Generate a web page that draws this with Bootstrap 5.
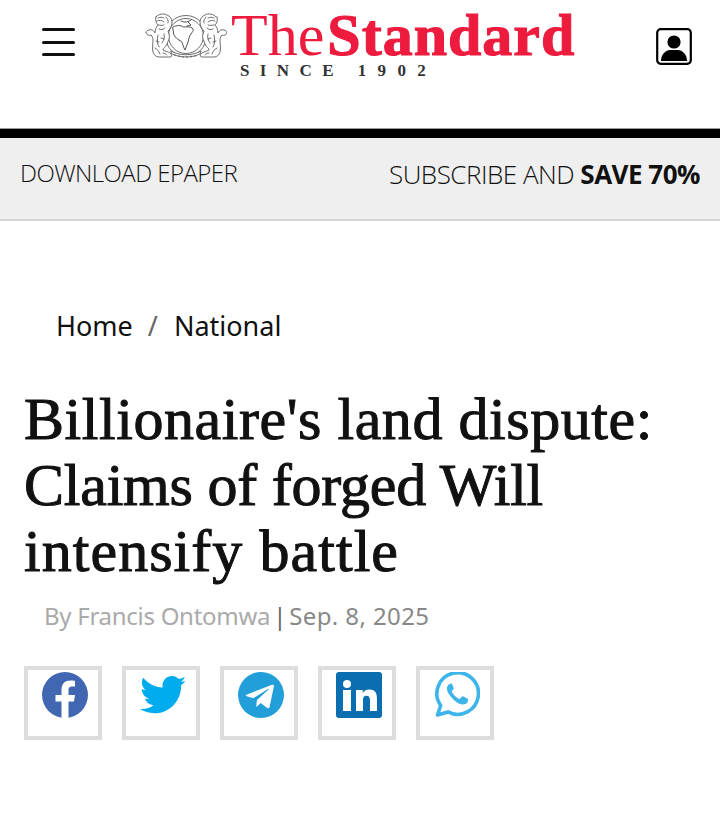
<!DOCTYPE html>
<html lang="en"><head><meta charset="utf-8">
<link href="https://cdn.jsdelivr.net/npm/bootstrap@5.3.0/dist/css/bootstrap.min.css" rel="stylesheet">
<style>
body{background:#fff;color:#000;font-family:"Open Sans","Noto Sans",sans-serif}
.top-head{height:128px;padding:12px 28px 0 42px;align-items:flex-start}
.burger{width:33px;margin-top:16px;background:none;border:0;padding:0}
.burger i{display:block;height:3px;background:#111;border-radius:2px;margin-bottom:9.5px}
.brand-wrap{margin-left:70px;width:432px;text-decoration:none}
.crest{width:82px;height:50px;flex:none}
.word{font-family:"Liberation Serif",serif;color:#ed1b3e;font-size:60px;line-height:46px;height:50px;margin-left:4px;white-space:nowrap}
.word b{letter-spacing:1px;margin-left:3px;-webkit-text-stroke:1.1px #ed1b3e}
.since{font-family:"Liberation Serif",serif;font-weight:700;font-size:17px;letter-spacing:10.4px;line-height:18px;color:#333;margin:0 0 0 95px;white-space:nowrap}
.since span{letter-spacing:11.4px;margin-left:-1px}
.user-ico{margin-left:auto;margin-top:16px;width:36px;height:37px;display:block}
.rule{height:10px;background:#000;border-top:1px solid #999}
.promo{height:83px;background:#efefef;border-bottom:2px solid #d6d6d6;padding:0 20px;color:#111;font-weight:300}
.promo b{font-weight:700}
.promo .dl{font-size:24px;line-height:70px;height:70px;white-space:nowrap;letter-spacing:-.55px}
.promo .sub{font-size:26px;line-height:73px;height:73px;white-space:nowrap;letter-spacing:-.5px}
.crumbs{margin:0;padding:86px 0 0 56px;font-size:27px;line-height:37px;font-family:"Noto Sans","Open Sans",sans-serif;color:#111;list-style:none}
.crumbs li+li::before{color:#666;padding:0 16px 0 15px;content:"/"}
.headline{font-family:"Liberation Serif",serif;font-weight:400;font-size:60px;line-height:66px;margin:42px 0 0 24px;color:#111;-webkit-text-stroke:1px #111}
.headline .l1{letter-spacing:.55px}
.headline .l2{letter-spacing:-.22px}
.headline .l3{letter-spacing:1.05px}
.byline{font-family:"Noto Sans","Open Sans",sans-serif;font-size:24px;line-height:34px;margin:15px 0 0 44px;color:#aaa;white-space:nowrap;letter-spacing:-.28px}
.byline .auth{color:#aaa}
.byline .dt{color:#888;letter-spacing:.4px}
.byline em{font-style:normal;color:#666;padding:0 3px}
.share{margin:33px 0 0 24px;gap:20px}
.share-btn{width:78px;height:74px;border:4px solid #ddd;display:flex;justify-content:center;align-items:flex-start;padding:2px 0 0 4px;background:#fff}
.share-btn svg{width:46px;height:46px;display:block}
</style></head><body>
<header class="d-flex top-head">
  <button class="burger" aria-label="Menu"><i></i><i></i><i></i></button>
  <a class="brand-wrap d-block" href="#">
    <div class="d-flex">
      <svg class="crest" viewBox="0 0 82 50" fill="none" stroke="#555" stroke-width=".85" stroke-linejoin="round" stroke-linecap="round">
        <circle cx="41" cy="24" r="20.500"/><circle cx="41" cy="24" r="17.500"/>
        <path d="M28 15c4-2 8-2 10 0 3 0 8-1 10 2 1 2-1 3-2 5-2 2-2 5-3 8-1 3-2 5-3 8-2-3-2-7-4-9-3-1-5-3-7-6z" stroke="#333" fill="#fff"/>
        <path d="M36 9c3 2 8 1 10-1M43 10l3 3-4 1" stroke="#333"/>
        <path d="M26 39c8 5 22 5 30 0l-1 3c-8 4-20 4-28 0z" fill="#fff"/>
        <path d="M30 42.500v1M34 43.500v1M38 44.500v1M42 44.500v1M46 44v1M50 43.500v1" stroke-width=".9"/>
        <path d="M11 5c2-3 8-4 11-2 3 1 5 4 5 7 0 4-2 7-4 9 1 3 2 5 1 8l-2 5c-1 3-4 4-4 6l2 1c2 1 5 1 6 3 1 1 1 3-1 3H14c-3 0-5-2-6-5-1-4 0-8 0-12 0-2-1-4-2-5-2 1-4 0-5-2 0-2 2-3 3-3 3-1 5 1 6 3 0-3 1-6 3-8-2-2-3-5-2-8z" fill="#fff"/>
        <path d="M71 5c-2-3-8-4-11-2-3 1-5 4-5 7 0 4 2 7 4 9-1 3-2 5-1 8l2 5c1 3 4 4 4 6l-2 1c-2 1-5 1-6 3-1 1-1 3 1 3h12c3 0 5-2 6-5 1-4 0-8 0-12 0-2 1-4 2-5 2 1 4 0 5-2 0-2-2-3-3-3-3-1-5 1-6 3 0-3-1-6-3-8 2-2 3-5 2-8z" fill="#fff"/>
        <path d="M13 6c2-1 4-1 6 0M12 9c2-1 5-1 7 1M13 13c2 0 4 1 6 0M14 17c2 1 4 1 6-1M21 5c1 2 3 3 2 6M19 22c1 3 0 6-2 9M13 23c-1 4-1 9 1 12M10 36c2 1 4 3 5 6M18 41c2 0 3 1 4 2M16 26l3 1M11 29l3 1M69 6c-2-1-4-1-6 0M70 9c-2-1-5-1-7 1M69 13c-2 0-4 1-6 0M68 17c-2 1-4 1-6-1M61 5c-1 2-3 3-2 6M63 22c-1 3 0 6 2 9M69 23c1 4 1 9-1 12M72 36c-2 1-4 3-5 6M64 41c-2 0-3 1-4 2M66 26l-3 1M71 29l-3 1"/>
      </svg>
      <div class="word">The<b>Standard</b></div>
    </div>
    <div class="since">SINCE <span>1902</span></div>
  </a>
  <svg class="user-ico" viewBox="0 0 36 37"><rect x="1.200" y="1.200" width="33.600" height="34.600" rx="3.500" fill="#fff" stroke="#000" stroke-width="2.200"/><circle cx="18" cy="14" r="6.600"/><path d="M5 33c0-7 5-11 9-11h8c4 0 9 4 9 11z"/></svg>
</header>
<div class="rule"></div>
<div class="promo d-flex justify-content-between align-items-start">
  <div class="dl">DOWNLOAD EPAPER</div>
  <div class="sub">SUBSCRIBE AND <b>SAVE 70%</b></div>
</div>
<ol class="crumbs d-flex"><li>Home</li><li>National</li></ol>
<h1 class="headline"><span class="l1 d-block">Billionaire's land dispute:</span><span class="l2 d-block">Claims of forged Will</span><span class="l3 d-block">intensify battle</span></h1>
<p class="byline"><span class="auth">By Francis Ontomwa</span><em>|</em><span class="dt">Sep. 8, 2025</span></p>
<div class="d-flex share">
  <a class="share-btn" href="#" aria-label="Facebook"><svg viewBox="0 0 46 46"><circle cx="23" cy="23" r="23" fill="#4267b2"/><path fill="#fff" d="M19.500 46V29.500H13.500V23h6V17.800C19.500 11.800 23 8.600 28.500 8.600c2.500 0 4.500.4 4.500.4v5.500h-2.700c-3 0-3.800 1.700-3.800 3.500V23h6.500l-1 6.500h-5.500V46z"/></svg></a>
  <a class="share-btn" href="#" aria-label="Twitter"><svg viewBox="0 0 46 46"><path fill="#00acee" d="M46 8.500c-1.700.8-3.500 1.300-5.400 1.500 2-1.200 3.500-3 4.200-5.200-1.800 1.100-3.900 1.900-6 2.300C37 5.200 34.600 4 31.900 4c-5.200 0-9.400 4.200-9.400 9.400 0 .7.100 1.500.2 2.200C14.900 15.200 8 11.400 3.200 5.700 2.400 7.100 1.900 8.700 1.900 10.400c0 3.300 1.700 6.200 4.200 7.900-1.500 0-3-.5-4.300-1.200v.1c0 4.600 3.200 8.400 7.500 9.200-.8.200-1.600.3-2.500.3-.6 0-1.200-.1-1.800-.2 1.200 3.800 4.700 6.500 8.800 6.600-3.200 2.500-7.300 4-11.700 4-.8 0-1.500 0-2.200-.1 4.200 2.700 9.100 4.200 14.400 4.200 17.300 0 26.800-14.300 26.800-26.800v-1.200c1.800-1.300 3.400-3 4.600-4.800z"/></svg></a>
  <a class="share-btn" href="#" aria-label="Telegram"><svg viewBox="0 0 46 46"><circle cx="23" cy="23" r="23" fill="#229ed9"/><path fill="#fff" d="M9 22.500 34 12.800c1.200-.4 2.200.3 1.800 2l-4.200 20c-.3 1.400-1.200 1.800-2.400 1.100l-6.500-4.800-3.100 3c-.4.400-.7.700-1.300.7l.5-6.600 12-10.900c.5-.5-.1-.7-.8-.3L15.200 26.300 8.800 24.300c-1.400-.4-1.400-1.400.2-1.800z"/></svg></a>
  <a class="share-btn" href="#" aria-label="LinkedIn"><svg viewBox="0 0 46 46"><rect width="46" height="46" rx="3" fill="#0a6eb0"/><circle cx="11" cy="12" r="4" fill="#fff"/><path fill="#fff" d="M7 18h8v21H7zM20 18h6.700v3c1-1.800 3.300-3.500 6.800-3.500 6.500 0 7.500 4.600 7.500 10.500v11h-7V29.500c0-2.500-.1-5.700-3.500-5.700S27 26.500 27 29.300V39h-7z"/></svg></a>
  <a class="share-btn" href="#" aria-label="WhatsApp"><svg viewBox="0 0 46 46"><path fill="none" stroke="#3db4ea" stroke-width="3.600" d="M3.500 43 6.700 33.500A20.800 20.800 0 1 1 14 39.900z" stroke-linejoin="round"/><path fill="#3db4ea" d="M17 11.500c-1 0-2.800 1-3.600 2.800-1 2.600-.4 6 3.500 10.500 4 5 8.400 7.500 11.500 7.800 2.200.2 4.800-1.200 5.400-3 .4-1.200.4-2.200.2-2.500-.5-.6-4.500-2.700-5.400-2.800-.8 0-2 2.300-2.800 2.600-1.200.4-7-4.300-8-7.200 0-1 2-2.200 2-3.200 0-.8-1.500-4.400-2-4.800-.2-.1-.5-.2-.8-.2z"/></svg></a>
</div>
</body></html>
